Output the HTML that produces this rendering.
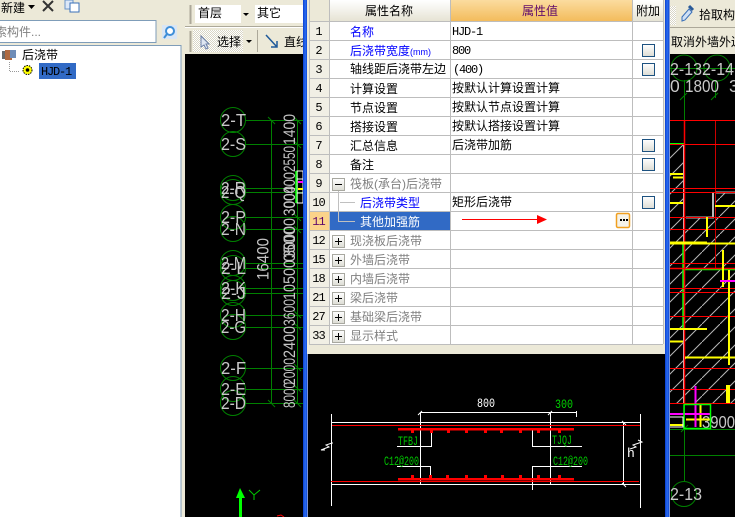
<!DOCTYPE html>
<html><head><meta charset="utf-8">
<style>
html,body{margin:0;padding:0;width:735px;height:517px;overflow:hidden;background:#ece9d8}
svg{display:block}
text{font-family:"WenQuanYi Zen Hei","Liberation Sans","Noto Sans CJK SC",sans-serif;font-size:12px}
.c{font-family:"Liberation Sans",sans-serif;font-size:17.500px;fill:#c8c8c8}
.d{font-family:"Liberation Sans",sans-serif;font-size:16.500px;fill:#c4c4c4}
.n{text-anchor:middle;font-size:12px;fill:#000;font-family:"Liberation Mono",monospace;letter-spacing:-1px}
.b{fill:#0000ff}.g{fill:#808080}
.gl{stroke:#008000;stroke-width:1;fill:none}
.r{stroke:#ff0000;stroke-width:1;fill:none}
.y{stroke:#ffff00;stroke-width:2;fill:none}
.w{stroke:#fff;stroke-width:1;fill:none}
.t{stroke:#bdbdbd;stroke-width:1;fill:none}
.m{font-family:"Liberation Mono",monospace;font-size:12px;letter-spacing:-1.200px}
.q{font-family:"Liberation Mono",monospace;font-size:13px}
</style></head><body>
<svg width="735" height="517" viewBox="0 0 735 517" xmlns="http://www.w3.org/2000/svg">
<defs>
<linearGradient id="h1" x1="0" y1="0" x2="0" y2="1"><stop offset="0" stop-color="#fff"/><stop offset="1" stop-color="#e6e3d4"/></linearGradient>
<linearGradient id="h2" x1="0" y1="0" x2="0" y2="1"><stop offset="0" stop-color="#fbdc9f"/><stop offset="1" stop-color="#f3bc5c"/></linearGradient>
<linearGradient id="cb" x1="0" y1="0" x2="0" y2="1"><stop offset="0" stop-color="#fff"/><stop offset="1" stop-color="#dcdcd4"/></linearGradient>
<linearGradient id="bl" x1="0" y1="0" x2="1" y2="0"><stop offset="0" stop-color="#0a3fd0"/><stop offset=".5" stop-color="#2a6cf0"/><stop offset="1" stop-color="#0a3fd0"/></linearGradient>
<pattern id="hatch" width="18" height="18" patternUnits="userSpaceOnUse"><path d="M0 18L18 0" stroke="#b8b8b8" stroke-width="1"/></pattern>
<pattern id="dots" width="2" height="2" patternUnits="userSpaceOnUse"><rect width="2" height="2" fill="#fff"/><rect width="1" height="1" fill="#d8d5c6"/><rect x="1" y="1" width="1" height="1" fill="#d8d5c6"/></pattern>
</defs>
<rect width="735" height="517" fill="#ece9d8"/>

<!-- LEFT PANEL -->
<text x="1" y="12">新建</text>
<path d="M28 5h7l-3.500 4z" fill="#000"/>
<path d="M43 1L53 11M53 1L43 11" stroke="#333" stroke-width="2"/>
<rect x="65" y="0" width="8" height="9" fill="#dce8f8" stroke="#6a94c8"/>
<rect x="70" y="3" width="9" height="9" fill="#fff" stroke="#3a70b8"/>
<rect x="-2" y="20.500" width="158" height="22" fill="#fff" stroke="#7f9db9"/>
<text x="-5" y="36" fill="#808080">索构件...</text>
<rect x="162" y="25" width="15" height="14" fill="#d9e6f5"/>
<circle cx="170" cy="31" r="4" fill="#fff" stroke="#3f8fd8" stroke-width="2"/>
<path d="M167 34l-3 4" stroke="#3f8fd8" stroke-width="2"/>
<rect x="-2" y="45.500" width="183" height="480" fill="#fff" stroke="#7f9db9"/>
<rect x="2" y="51" width="6" height="8" fill="#6a6a6a"/><rect x="5" y="50" width="7" height="10" fill="#b06a40"/><rect x="10" y="50" width="6" height="8" fill="#6f8db8"/>
<text x="22" y="59">后浇带</text>
<path d="M9.500 62v9.500H20" stroke="#999" stroke-dasharray="1 1" fill="none"/>
<circle cx="27.500" cy="70" r="4.500" fill="#ffff00" stroke="#000" stroke-dasharray="1.500 1"/>
<circle cx="27.500" cy="70" r="1.800" fill="#000"/>
<rect x="39" y="63" width="37" height="16" fill="#316ac5"/>
<text x="41" y="75" class="m">HJD-1</text>

<!-- MIDDLE TOOLBAR -->
<path d="M190.500 5v19M190.500 31v21" stroke="#aca899" stroke-width="2" fill="none"/>
<rect x="195" y="5" width="55" height="18" fill="#fff"/><rect x="241" y="5" width="9" height="18" fill="#ece9d8"/>
<path d="M243 13h6l-3 3z" fill="#000"/>
<text x="198" y="17">首层</text>
<rect x="255" y="5" width="48" height="18" fill="#fff"/>
<text x="257" y="17">其它</text>
<rect x="185" y="27" width="118" height="1" fill="#fff"/><rect x="185" y="26" width="118" height="1" fill="#aca899"/>
<rect x="193" y="30" width="50" height="22" fill="url(#dots)"/>
<path d="M201 36v11l3-2 2 4 2-1-2-4h3z" fill="#dfe6f2" stroke="#6b7fa8"/>
<text x="217" y="46">选择</text>
<path d="M246 40h6l-3 3z" fill="#000"/>
<path d="M257.500 30v22" stroke="#aca899"/>
<path d="M266 35L277 47M277 41v6h-6" stroke="#1f5a9a" stroke-width="1.500" fill="none"/>
<text x="284" y="46">直线</text>

<!-- LEFT CAD -->
<rect x="185" y="54" width="118" height="463" fill="#000"/>
<g class="gl">
<path d="M245 120.500H303M245 144.500H303M245 188.500H303M245 192.500H303M245 217.500H303M245 229.500H303M245 263.500H303M245 268.500H303M245 288.500H303M245 293.500H303M245 315.500H303M245 327.500H303M245 368.500H303M245 389.500H303M245 403.500H303"/>
<path d="M271.500 120V403M297.500 120V403"/>
<path d="M268 117l7 7M294 117l7 7M294 141l7 7M268 400l7 7M294 400l7 7M294 385l7 7M294 364l7 7M294 323l7 7M294 311l7 7M294 214l7 7M294 226l7 7"/>
<circle cx="233" cy="120" r="12.500"/><circle cx="233" cy="144" r="12.500"/>
<circle cx="233" cy="188" r="12.500"/><circle cx="233" cy="192" r="12.500"/>
<circle cx="233" cy="217" r="12.500"/><circle cx="233" cy="229" r="12.500"/>
<circle cx="233" cy="263" r="12.500"/><circle cx="233" cy="268" r="12.500"/>
<circle cx="233" cy="288" r="12.500"/><circle cx="233" cy="293" r="12.500"/>
<circle cx="233" cy="315" r="12.500"/><circle cx="233" cy="327" r="12.500"/>
<circle cx="233" cy="368" r="12.500"/><circle cx="233" cy="389" r="12.500"/><circle cx="233" cy="403" r="12.500"/>
</g>
<text class="c" x="221" y="126" textLength="25" lengthAdjust="spacingAndGlyphs">2-T</text>
<text class="c" x="221" y="150" textLength="25" lengthAdjust="spacingAndGlyphs">2-S</text>
<text class="c" x="221" y="194" textLength="25" lengthAdjust="spacingAndGlyphs">2-R</text>
<text class="c" x="221" y="198" textLength="25" lengthAdjust="spacingAndGlyphs">2-Q</text>
<text class="c" x="221" y="223" textLength="25" lengthAdjust="spacingAndGlyphs">2-P</text>
<text class="c" x="221" y="235" textLength="25" lengthAdjust="spacingAndGlyphs">2-N</text>
<text class="c" x="221" y="269" textLength="25" lengthAdjust="spacingAndGlyphs">2-M</text>
<text class="c" x="221" y="274" textLength="25" lengthAdjust="spacingAndGlyphs">2-L</text>
<text class="c" x="221" y="294" textLength="25" lengthAdjust="spacingAndGlyphs">2-K</text>
<text class="c" x="221" y="299" textLength="25" lengthAdjust="spacingAndGlyphs">2-J</text>
<text class="c" x="221" y="321" textLength="25" lengthAdjust="spacingAndGlyphs">2-H</text>
<text class="c" x="221" y="333" textLength="25" lengthAdjust="spacingAndGlyphs">2-G</text>
<text class="c" x="221" y="374" textLength="25" lengthAdjust="spacingAndGlyphs">2-F</text>
<text class="c" x="221" y="395" textLength="25" lengthAdjust="spacingAndGlyphs">2-E</text>
<text class="c" x="221" y="409" textLength="25" lengthAdjust="spacingAndGlyphs">2-D</text>
<text class="d" transform="translate(268.500 280) rotate(-90)" textLength="42" lengthAdjust="spacingAndGlyphs">16400</text>
<text class="d" transform="translate(295 145) rotate(-90)" textLength="31" lengthAdjust="spacingAndGlyphs">1400</text>
<text class="d" transform="translate(295 172) rotate(-90)" textLength="26" lengthAdjust="spacingAndGlyphs">2550</text>
<text class="d" transform="translate(295 208) rotate(-90)" textLength="36" lengthAdjust="spacingAndGlyphs">00400</text>
<text class="d" transform="translate(295 216) rotate(-90)" textLength="30" lengthAdjust="spacingAndGlyphs">3000</text>
<text class="d" transform="translate(295 258) rotate(-90)" textLength="40" lengthAdjust="spacingAndGlyphs">30000</text>
<text class="d" transform="translate(295 262) rotate(-90)" textLength="36" lengthAdjust="spacingAndGlyphs">0500</text>
<text class="d" transform="translate(295 300) rotate(-90)" textLength="40" lengthAdjust="spacingAndGlyphs">10500</text>
<text class="d" transform="translate(295 326) rotate(-90)" textLength="27" lengthAdjust="spacingAndGlyphs">3600</text>
<text class="d" transform="translate(295 358) rotate(-90)" textLength="32" lengthAdjust="spacingAndGlyphs">2400</text>
<text class="d" transform="translate(295 385) rotate(-90)" textLength="27" lengthAdjust="spacingAndGlyphs">2000</text>
<text class="d" transform="translate(295 408) rotate(-90)" textLength="26" lengthAdjust="spacingAndGlyphs">8000</text>
<path d="M297 171h6v32h-6zM297 179h6M297 193h6" stroke="#fff" fill="none"/>
<path d="M296 171v32" stroke="#00ff00" stroke-width="1.500"/>
<rect x="298" y="181" width="5" height="2" fill="#ff00ff"/>
<rect x="298" y="188" width="5" height="2" fill="#ffff00"/>
<path d="M240 488l-4 10h3v19h3v-19h3z" fill="#00ff00"/>
<path d="M249 490l5 5 6-5M254 495v5" stroke="#00cc00" fill="none"/>
<path d="M277 516l4-1 3 2" stroke="#ff0000" fill="none"/>

<!-- BLUE BARS -->
<rect x="303" y="0" width="4.500" height="517" fill="url(#bl)"/>
<rect x="665" y="0" width="4.500" height="517" fill="url(#bl)"/>

<!-- DIALOG -->
<rect x="307" y="0" width="358" height="354" fill="#ece9d8"/>
<rect x="309" y="0" width="354" height="344" fill="#fff"/>
<rect x="309" y="0" width="20" height="344" fill="#f1efe5"/>
<rect x="329" y="0" width="121" height="21" fill="url(#h1)"/>
<rect x="450" y="0" width="182" height="21" fill="url(#h2)"/>
<rect x="632" y="0" width="31" height="21" fill="url(#h1)"/>
<rect x="309" y="0" width="20" height="21" fill="#ece9d8"/>
<rect x="330" y="212" width="120" height="18" fill="#316ac5"/>
<rect x="309" y="212" width="20" height="18" fill="#fbd38a"/>
<g class="t">
<path d="M309 21.500H663M309 40.500H663M309 59.500H663M309 78.500H663M309 97.500H663M309 116.500H663M309 135.500H663M309 154.500H663M309 173.500H663M309 192.500H663M309 211.500H663M309 230.500H663M309 249.500H663M309 268.500H663M309 287.500H663M309 306.500H663M309 325.500H663M309 344.500H663"/>
<path d="M309.500 0V344M329.500 0V344M450.500 0V344M632.500 0V344M663.500 0V344"/>
</g>
<text x="365" y="15">属性名称</text>
<text x="522" y="15" fill="#5f0a6b">属性值</text>
<text x="636" y="15">附加</text>

<text class="n" x="318.500" y="35">1</text><text class="n" x="318.500" y="54">2</text><text class="n" x="318.500" y="73">3</text><text class="n" x="318.500" y="92">4</text><text class="n" x="318.500" y="111">5</text><text class="n" x="318.500" y="130">6</text><text class="n" x="318.500" y="149">7</text><text class="n" x="318.500" y="168">8</text><text class="n" x="318.500" y="187">9</text><text class="n" x="318.500" y="206">10</text>
<text class="n" x="318.500" y="225" style="fill:#5f0a6b">11</text>
<text class="n" x="318.500" y="244">12</text><text class="n" x="318.500" y="263">15</text><text class="n" x="318.500" y="282">18</text><text class="n" x="318.500" y="301">21</text><text class="n" x="318.500" y="320">27</text><text class="n" x="318.500" y="339">33</text>

<text x="350" y="36" class="b">名称</text>
<text x="350" y="55" class="b">后浇带宽度<tspan style="font-size:9px">(mm)</tspan></text>
<text x="350" y="73">轴线距后浇带左边</text>
<text x="350" y="93">计算设置</text>
<text x="350" y="112">节点设置</text>
<text x="350" y="131">搭接设置</text>
<text x="350" y="150">汇总信息</text>
<text x="350" y="169">备注</text>
<text x="350" y="188" class="g">筏板(承台)后浇带</text>
<text x="360" y="207" class="b">后浇带类型</text>
<text x="360" y="226" fill="#fff">其他加强筋</text>
<text x="350" y="245" class="g">现浇板后浇带</text>
<text x="350" y="264" class="g">外墙后浇带</text>
<text x="350" y="283" class="g">内墙后浇带</text>
<text x="350" y="302" class="g">梁后浇带</text>
<text x="350" y="321" class="g">基础梁后浇带</text>
<text x="350" y="340" class="g">显示样式</text>

<text x="452" y="35" class="m">HJD-1</text>
<text x="452" y="54" class="m">800</text>
<text x="453" y="73" class="m">(400)</text>
<text x="452" y="92">按默认计算设置计算</text>
<text x="452" y="111">按默认节点设置计算</text>
<text x="452" y="130">按默认搭接设置计算</text>
<text x="452" y="149">后浇带加筋</text>
<text x="452" y="206">矩形后浇带</text>

<g fill="url(#cb)" stroke="#1c5180">
<rect x="642.500" y="44.500" width="12" height="12"/>
<rect x="642.500" y="63.500" width="12" height="12"/>
<rect x="642.500" y="139.500" width="12" height="12"/>
<rect x="642.500" y="158.500" width="12" height="12"/>
<rect x="642.500" y="196.500" width="12" height="12"/>
</g>
<g fill="url(#cb)" stroke="#a8a8a0">
<rect x="332.500" y="178.500" width="12" height="12"/>
<rect x="332.500" y="235.500" width="12" height="12"/>
<rect x="332.500" y="254.500" width="12" height="12"/>
<rect x="332.500" y="273.500" width="12" height="12"/>
<rect x="332.500" y="292.500" width="12" height="12"/>
<rect x="332.500" y="311.500" width="12" height="12"/>
<rect x="332.500" y="330.500" width="12" height="12"/>
</g>
<path d="M335 184.500h7M335 241.500h7M338.500 238v7M335 260.500h7M338.500 257v7M335 279.500h7M338.500 276v7M335 298.500h7M338.500 295v7M335 317.500h7M338.500 314v7M335 336.500h7M338.500 333v7" stroke="#000" fill="none"/>
<path d="M338.500 191V221.500H355M340 202.500H355" stroke="#c0c0c0" fill="none"/>
<path d="M462 219.500H537" stroke="#ff0000"/><path d="M537 215l10 4.500-10 4.500z" fill="#ff0000"/>
<rect x="616.500" y="213.500" width="13" height="14" rx="1.500" fill="#f5f3ea" stroke="#f0a020" stroke-width="1.500"/>
<path d="M620 220h2M623 220h2M626 220h2" stroke="#000" stroke-width="2"/>

<!-- DIAGRAM -->
<rect x="308" y="354" width="357" height="163" fill="#000"/>
<g class="w">
<path d="M331.500 414V506M640.500 414V508M331 422.500H640M331 484.500H640"/>
<path d="M420.500 412V484M550.500 412V484M420 412.500H550M550 412.500H576M576.500 411v6M418 415l4-4M548 415l4-4M623.500 422V485"/>
<path d="M397 446.500H431.500V430M397 466.500H430.500V477M532.500 428V446.500H582M532.500 490V466.500H582"/>
<path d="M325 450l-4 0 5-2 3-1-3-2 6-2 1 0M638 440l4 2-6 2-3 1 3 2-6 2"/>
<path d="M622 421l4 4M622 483l4 4"/>
</g>
<path d="M332 425.500H640M331 481.500H639" stroke="#ff0000"/>
<rect x="398" y="428" width="176" height="2.500" fill="#ff0000"/>
<rect x="398" y="478" width="176" height="2.500" fill="#ff0000"/>
<g fill="#ff0000">
<rect x="411" y="430" width="3" height="3"/><rect x="430" y="430" width="3" height="3"/><rect x="447" y="430" width="3" height="3"/><rect x="465" y="430" width="3" height="3"/><rect x="484" y="430" width="3" height="3"/><rect x="500" y="430" width="3" height="3"/><rect x="519" y="430" width="3" height="3"/><rect x="537" y="430" width="3" height="3"/><rect x="558" y="430" width="3" height="3"/>
<rect x="411" y="475" width="3" height="3"/><rect x="429" y="475" width="3" height="3"/><rect x="446" y="475" width="3" height="3"/><rect x="465" y="475" width="3" height="3"/><rect x="484" y="475" width="3" height="3"/><rect x="501" y="475" width="3" height="3"/><rect x="519" y="475" width="3" height="3"/><rect x="537" y="475" width="3" height="3"/><rect x="558" y="475" width="3" height="3"/>
</g>
<text x="477" y="407" class="q" fill="#fff" textLength="18" lengthAdjust="spacingAndGlyphs">800</text>
<text x="555" y="408" class="q" fill="#00d000" textLength="18" lengthAdjust="spacingAndGlyphs">300</text>
<text x="398" y="445" class="q" fill="#00c800" textLength="20" lengthAdjust="spacingAndGlyphs">TFBJ</text>
<text x="552" y="444" class="q" fill="#00c800" textLength="20" lengthAdjust="spacingAndGlyphs">TJQJ</text>
<text x="384" y="465" class="q" fill="#00c800" textLength="35" lengthAdjust="spacingAndGlyphs">C12@200</text>
<text x="553" y="465" class="q" fill="#00c800" textLength="35" lengthAdjust="spacingAndGlyphs">C12@200</text>
<text x="627" y="457" class="q" fill="#fff">h</text>

<!-- RIGHT TOOLBAR -->
<rect x="670" y="27" width="65" height="1" fill="#aca899"/>
<rect x="670" y="6" width="6" height="19" fill="url(#dots)"/>
<path d="M682 21l3-1 7-8-3-3-7 8z" fill="#cfe0f5" stroke="#3a70b8"/>
<path d="M689 6l4 4" stroke="#2a5a98" stroke-width="3"/>
<text x="699" y="19">拾取构件</text>
<text x="671" y="46">取消外墙外边</text>

<!-- RIGHT CAD -->
<rect x="670" y="54" width="65" height="463" fill="#000"/>
<clipPath id="rc"><rect x="670" y="54" width="65" height="463"/></clipPath>
<g clip-path="url(#rc)">
<rect x="670" y="217" width="65" height="186" fill="url(#hatch)"/>
<rect x="670" y="145" width="14" height="72" fill="url(#hatch)"/>
<rect x="716" y="193" width="19" height="24" fill="url(#hatch)"/>
<g class="gl">
<path d="M670 68.500H735M684.500 80V120M715.500 80V98M684.500 403V481M670 429.500H735M670 455.500H735"/>
<circle cx="684" cy="68" r="13"/><circle cx="717" cy="68" r="13"/>
<circle cx="684" cy="494" r="12.500"/>
<path d="M680 100l7-7M711 100l7-7M681 432l7-7"/>
</g>
<text class="c" x="670" y="75" textLength="32" lengthAdjust="spacingAndGlyphs">2-13</text>
<text class="c" x="702" y="75" textLength="32" lengthAdjust="spacingAndGlyphs">2-14</text>
<text class="c" x="670" y="92">0</text>
<text class="c" x="685" y="92" textLength="34" lengthAdjust="spacingAndGlyphs">1800</text>
<text class="c" x="729" y="92">3</text>
<text class="c" x="702" y="428" textLength="33" lengthAdjust="spacingAndGlyphs">3900</text>
<text class="c" x="670" y="500" textLength="32" lengthAdjust="spacingAndGlyphs">2-13</text>
<path d="M684 143.500H670" stroke="#00ff00"/>
<path d="M684 145V403" stroke="#d0d0d0" stroke-width="2"/>
<path d="M686 217.500H713V192M716 192.500H735" stroke="#b8b8b8" stroke-width="2" fill="none"/>
<path d="M685 269.500H735" stroke="#00ff00" stroke-width="1.500"/>
<path d="M683 243V328" stroke="#00ff00" stroke-width="1.500"/>
<path d="M684.500 120V403" stroke="#ff0000" stroke-width="1.500"/>
<path d="M715.500 120V268" stroke="#cc0000"/>
<path d="M670 120.500H735M670 144.500H735M670 188.500H735M670 192.500H735M670 217.500H735M670 229.500H735M670 263.500H735M670 288.500H735M670 292.500H735M670 316.500H735M670 368.500H735M670 389.500H735M670 403.500H735" class="r"/>
<path d="M670 268.500H735" stroke="#ff0000" stroke-width="1.500"/>
<g class="y">
<path d="M670 174H683M673 177.500H683M670 203H683M715 206H735M707 217V237M723 250V287M729 270V365"/>
<path d="M670 243H707" stroke-width="3"/><path d="M707 243.500H735"/>
<path d="M670 329H707M670 341.500H683M685 357.500H735"/>
<path d="M728 385V403" stroke-width="4"/>
<path d="M700.500 405V427M686 419.500H710M670 425H683"/>
</g>
<path d="M720 281H735" stroke="#ff00ff" stroke-width="2"/>
<path d="M695.500 386V427" stroke="#ff00ff" stroke-width="2"/>
<path d="M670 414H710" stroke="#ff00ff" stroke-width="2"/>
<path d="M683.500 404.500H710.500V428.500H684V404.500" stroke="#00ff00" fill="none" stroke-width="1.500"/>
<path d="M670 417H683V427H670" stroke="#fff" fill="none"/>
</g>
</svg>
</body></html>
